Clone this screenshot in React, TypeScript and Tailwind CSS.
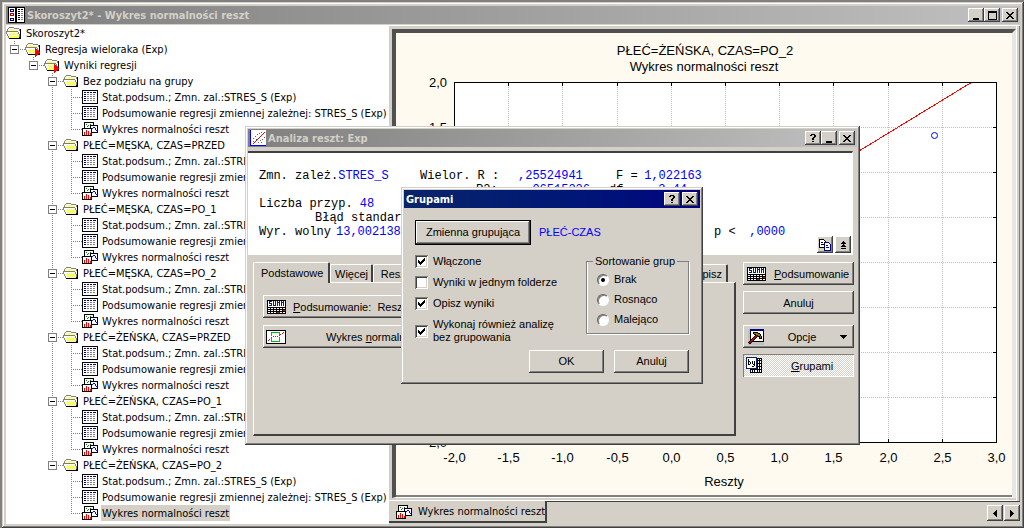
import { ReactNode } from 'react';
import clsx from 'clsx';

const RAISED =
    'shadow-[inset_-1px_-1px_#404040,inset_1px_1px_#fff,inset_-2px_-2px_#808080,inset_2px_2px_#d4d0c8]';
const FRAME =
    'bg-[#d4d0c8] shadow-[inset_-1px_-1px_#404040,inset_1px_1px_#d4d0c8,inset_-2px_-2px_#808080,inset_2px_2px_#fff]';
const UI_FONT = "font-['Liberation_Sans',Arial,sans-serif]";
const TAHOMA_FONT = "font-['DejaVu_Sans_Condensed','Liberation_Sans',sans-serif]";

/* ---------- icons ---------- */

function FolderIcon({ marked }: { marked?: boolean }) {
    return (
        <svg width="16" height="16" viewBox="0 0 16 16" className="shrink-0" shapeRendering="crispEdges">
            <path d="M2 3h6v1h5v2h1v7H3V7H2z" fill="#fff" />
            <path d="M3 4h5v1h4v2H3z" fill="#ffff80" />
            <path d="M3 2h5v1h5v1h1v2h-1V4H8V3H3v1H2v2H1V4h1V3h1z" fill="#808080" />
            <path d="M1 7h11v1h1v3h1v2H3v-2H2V9H1z" fill="#fff" />
            <path d="M3 8h9v2h1v3H4v-2H3z" fill="#ffff50" />
            <path
                d="M3 8h1v1H3zM5 8h1v1H5zM7 8h1v1H7zM9 8h1v1H9zM4 10h1v1H4zM6 10h1v1H6zM8 10h1v1H8zM10 10h1v1h-1zM5 12h1v1H5zM7 12h1v1H7zM9 12h1v1H9zM11 12h1v1h-1z"
                fill="#fff"
            />
            <path d="M0 6h12v1H0zM0 7h1v2H0zM1 9h1v2H1zM2 11h1v2H2zM12 7h1v2h-1zM13 9h1v3h-1z" fill="#808080" />
            <path d="M14 4h1v9h-1zM3 13h12v1H3zM13 12h1v1h-1z" fill="#000" />
            {marked && <path d="M10 7h1v1h1v1h1v1h1v1h1v1h-1v1h-1v1h-1v1h-1v1h-1z" fill="#f00" />}
        </svg>
    );
}

function SheetIcon() {
    return (
        <svg width="16" height="16" viewBox="0 0 16 16" className="shrink-0" shapeRendering="crispEdges">
            <rect x="0.5" y="1.5" width="15" height="13" fill="#fff" stroke="#000" />
            <path d="M2 3.5h2M5 3.5h2M8 3.5h2M11 3.5h3" stroke="#000080" />
            <path d="M2 5.5h2M2 7.5h2M2 9.5h2M2 11.5h2" stroke="#000080" />
            <path
                d="M5 5.5h2M8 5.5h2M11 5.5h2M5 7.5h2M8 7.5h2M11 7.5h2M5 9.5h2M8 9.5h2M11 9.5h2M5 11.5h2M8 11.5h2M11 11.5h2"
                stroke="#808080"
            />
        </svg>
    );
}

function GraphIcon() {
    return (
        <svg width="16" height="16" viewBox="0 0 16 16" className="shrink-0" shapeRendering="crispEdges">
            <rect x="2.5" y="1.5" width="9" height="7" fill="#fff" stroke="#000" />
            <path d="M4 3.5h1M6 4.5h1M8 3.5h1M5 5.5h1" stroke="#008000" />
            <rect x="8.5" y="4.5" width="7" height="7" fill="#fff" stroke="#000" />
            <path d="M10 7.5h1M11 6.5h2M13 7.5h1M13 8.5h1M14 9.5h1" stroke="#00f" />
            <rect x="0.5" y="7.5" width="9" height="7" fill="#fff" stroke="#000" />
            <path d="M2.5 11v3M4.5 9v5M6.5 10v4M8.5 12v2" stroke="#f00" />
        </svg>
    );
}

function WorkbookIcon() {
    return (
        <svg width="17" height="17" viewBox="0 0 17 17" className="shrink-0" shapeRendering="crispEdges">
            <rect x="0.5" y="0.5" width="16" height="15" fill="#fff" stroke="#000" />
            <path d="M8.5 0v16M7.5 0v16" stroke="#000" />
            <rect x="2.5" y="2.5" width="3" height="2" fill="#ffff80" stroke="#000080" />
            <rect x="2.5" y="6.5" width="3" height="2" fill="#fff" stroke="#c00000" />
            <rect x="2.5" y="11.5" width="3" height="2" fill="#ffff80" stroke="#000080" />
            <path d="M10 2.5h2M13 2.5h2M10 4.5h2M10 6.5h2M10 8.5h2M10 10.5h2M10 12.5h2" stroke="#000" />
            <path d="M13 4.5h2M13 6.5h2M13 8.5h2M13 10.5h2M13 12.5h2" stroke="#808080" />
        </svg>
    );
}

function ScatterIcon() {
    return (
        <svg width="16" height="16" viewBox="0 0 16 16" className="shrink-0" shapeRendering="crispEdges">
            <path d="M0 0h16v16H0z" fill="#fff" />
            <path d="M0.5 0v16M0 15.5h16" stroke="#00f" />
            <path d="M3 14L15 2" stroke="#f00" shapeRendering="auto" />
            <path
                d="M3 8.5h1M5 6.5h1M7 4.5h1M9 3.5h1M11 2.5h1M3 11.5h1M6 9.5h1M8 12.5h1M10 10.5h1M12 9.5h1M14 7.5h1M11 12.5h1"
                stroke="#606060"
            />
        </svg>
    );
}

function SummaryIcon() {
    return (
        <svg width="19" height="14" viewBox="0 0 19 14" className="shrink-0" shapeRendering="crispEdges">
            <path d="M0 0h19v14H0z" fill="#000" />
            <path d="M1 1h17v6H1z" fill="#fff" />
            <path
                d="M2 1.5h3M2 2.5h1M2 3.5h3M4 4.5h1M2 5.5h3M6.5 1v5M8.5 1v5M7 5.5h1M10.5 1v5M11 2.5h1M12.5 1v5M14.5 1v5M15 2.5h1M16.5 1v5"
                stroke="#0a246a"
            />
            <path d="M1 8.5h17M1 10.5h17M1 12.5h17" stroke="#fff" strokeDasharray="2 1" />
            <path d="M16 10.5h2M10 12.5h2" stroke="#f00" />
        </svg>
    );
}

function NormalPlotIcon() {
    return (
        <svg width="20" height="14" viewBox="0 0 20 14" className="shrink-0" shapeRendering="crispEdges">
            <rect x="0.5" y="0.5" width="19" height="13" fill="#fff" stroke="#000" />
            <path d="M5.5 6V2.5h8V5M5.5 8v3.5h8V7" fill="none" stroke="#00c000" />
            <path
                d="M2 10.5h1M3 9.5h1M5 7.5h1M7 6.5h1M9 6.5h1M11 6.5h1M13 5.5h1M14 4.5h1M16 3.5h1M17 2.5h1"
                stroke="#f00"
            />
        </svg>
    );
}

function HammerIcon() {
    return (
        <svg width="16" height="16" viewBox="0 0 16 16" className="shrink-0" shapeRendering="crispEdges">
            <path d="M0 0h16v16H0z" fill="#c0c0c0" />
            <rect x="2.5" y="0.5" width="13" height="12" fill="#fff" stroke="#000" />
            <path d="M2 0h14v2H2z" fill="#000080" />
            <path d="M5 3h5v1h2v1h1v2h1v3h-3V8h-1V7H8V6H6V5H5z" fill="#000" />
            <path d="M6 4h4v1h2v2h1v2h-1V7h-2V6H8V5H6z" fill="#808000" />
            <path d="M9 6.5L1 14.5" stroke="#000" strokeWidth="3" />
            <path d="M9 6.5L1.5 14" stroke="#c00000" />
        </svg>
    );
}

function ByGroupIcon() {
    return (
        <svg width="17" height="17" viewBox="0 0 17 17" className="shrink-0" shapeRendering="crispEdges">
            <path d="M4 1h12v15H4z" fill="#000" />
            <path
                d="M12 2h1v1h-1zM14 2h1v1h-1zM12 4h1v2h-1zM14 4h1v2h-1zM12 7h1v2h-1zM14 7h1v2h-1zM12 10h1v2h-1zM14 10h1v2h-1zM5 13h1v2H5zM7 13h1v2H7zM9 13h2v2H9zM12 13h1v2h-1zM14 13h1v2h-1z"
                fill="#fff"
            />
            <rect x="0.5" y="0.5" width="10" height="11" fill="#fff" stroke="#0a246a" />
            <path d="M2.5 2v6M3 4.5h1M4.5 5v2M3 7.5h1M6.5 4v3M7 7.5h1M8.5 4v5M6 9.5h2" stroke="#000" />
        </svg>
    );
}

function CopyIcon() {
    return (
        <svg width="12" height="12" viewBox="0 0 12 12" shapeRendering="crispEdges">
            <path d="M0.5 0.5h4l2 2v6h-6z" fill="#fff" stroke="#000" />
            <path d="M2 3.5h2M2 5.5h3" stroke="#000" />
            <path d="M5.5 3.5h4l2 2v6h-6z" fill="#fff" stroke="#000080" />
            <path d="M7 6.5h2M7 8.5h3" stroke="#000080" />
        </svg>
    );
}

function RollUpIcon() {
    return (
        <svg width="5" height="8" viewBox="0 0 5 8" shapeRendering="crispEdges">
            <path d="M2 0h1v1h1v1h1v1H3v1h1v1h1v1H0V5h1V4h1V3H0V2h1V1h1zM0 7h5v1H0z" fill="#000" />
        </svg>
    );
}

/* ---------- window chrome ---------- */

type Glyph = 'help' | 'min' | 'max' | 'close';

const GLYPHS: Record<Glyph, string> = {
    help: 'M2 0h4v1H2zM1 1h2v1H1zM5 1h2v2H5zM4 3h2v1H4zM3 4h2v2H3zM3 7h2v1H3z',
    min: 'M1 7h6v2H1z',
    max: 'M0 0h9v9H0zM1 2v6h7V2z',
    close: 'M0 1h2v1h1v1h2V2h1V1h2v1H7v1H6v1H5v1h1v1h1v1h1v1H6V7H5V6H3v1H2v1H0V7h1V6h1V5h1V4H2V3H1V2H0z',
};

const GLYPH_LABELS: Record<Glyph, string> = {
    help: 'Pomoc',
    min: 'Minimalizuj',
    max: 'Maksymalizuj',
    close: 'Zamknij',
};

function CaptionButton({ glyph, className }: { glyph: Glyph; className?: string }) {
    return (
        <button
            type="button"
            aria-label={GLYPH_LABELS[glyph]}
            className={clsx('flex h-3.5 w-4 items-center justify-center bg-[#d4d0c8]', RAISED, className)}
        >
            <svg width="9" height="9" viewBox="0 0 9 9" shapeRendering="crispEdges">
                <path d={GLYPHS[glyph]} fill="#000" fillRule="evenodd" />
            </svg>
        </button>
    );
}

function TitleBar({
    title,
    icon,
    active,
    buttons,
}: {
    title: string;
    icon?: ReactNode;
    active?: boolean;
    buttons: Glyph[];
}) {
    return (
        <header
            className={clsx(
                'flex h-[18px] shrink-0 items-center bg-linear-to-r px-0.5 text-[11px] leading-4 font-bold whitespace-nowrap',
                TAHOMA_FONT,
                active ? 'from-[#0a246a] to-[#000080] text-white' : 'from-[#808080] to-[#c0c0c0] text-[#d4d0c8]',
            )}
        >
            {icon}
            <h2 className={clsx('flex-1 pt-0.5', icon && 'pl-0.5')}>{title}</h2>
            {buttons.map((glyph) => (
                <CaptionButton key={glyph} glyph={glyph} className={clsx(glyph === 'close' && 'ml-0.5')} />
            ))}
        </header>
    );
}

function PushButton({ children, className }: { children: ReactNode; className?: string }) {
    return (
        <button
            type="button"
            className={clsx('flex h-[23px] items-center bg-[#d4d0c8] whitespace-nowrap', RAISED, className)}
        >
            {children}
        </button>
    );
}

/* ---------- workbook tree ---------- */

function Joint({ up, down, across, box }: { up?: boolean; down?: boolean; across?: boolean; box?: boolean }) {
    return (
        <svg width="19" height="16" viewBox="0 0 19 16" className="shrink-0" shapeRendering="crispEdges">
            <g stroke="#808080" strokeDasharray="1 1">
                {up && <path d="M8.5 0v8" />}
                {down && <path d="M8.5 8v8" />}
                {across && <path d="M8 8.5h11" />}
            </g>
            {box && (
                <>
                    <rect x="4.5" y="4.5" width="8" height="8" fill="#fff" stroke="#808080" />
                    <path d="M6 8.5h5" stroke="#000" />
                </>
            )}
        </svg>
    );
}

function TreeRow({ children, label, selected }: { children: ReactNode; label: string; selected?: boolean }) {
    return (
        <li className="flex h-4 items-center">
            {children}
            <span className={clsx('ml-[3px] h-4 px-px leading-[18px]', selected && 'bg-[#d4d0c8]')}>{label}</span>
        </li>
    );
}

const GROUPS = [
    'Bez podziału na grupy',
    'PŁEĆ=MĘSKA, CZAS=PRZED',
    'PŁEĆ=MĘSKA, CZAS=PO_1',
    'PŁEĆ=MĘSKA, CZAS=PO_2',
    'PŁEĆ=ŻEŃSKA, CZAS=PRZED',
    'PŁEĆ=ŻEŃSKA, CZAS=PO_1',
    'PŁEĆ=ŻEŃSKA, CZAS=PO_2',
];

const RESULTS = [
    'Stat.podsum.; Zmn. zal.:STRES_S (Exp)',
    'Podsumowanie regresji zmiennej zależnej: STRES_S (Exp)',
    'Wykres normalności reszt',
];

function Tree() {
    return (
        <nav className={clsx('w-[383px] shrink-0 overflow-hidden bg-white text-[11px] whitespace-nowrap', TAHOMA_FONT)}>
            <ul>
                <TreeRow label="Skoroszyt2*">
                    <FolderIcon />
                </TreeRow>
                <TreeRow label="Regresja wieloraka (Exp)">
                    <Joint up across box />
                    <FolderIcon marked />
                </TreeRow>
                <TreeRow label="Wyniki regresji">
                    <Joint />
                    <Joint up across box />
                    <FolderIcon marked />
                </TreeRow>
                {GROUPS.map((group, g) => {
                    const last = g === GROUPS.length - 1;
                    return (
                        <li key={group}>
                            <ul>
                                <TreeRow label={group}>
                                    <Joint />
                                    <Joint />
                                    <Joint up down={!last} across box />
                                    <FolderIcon />
                                </TreeRow>
                                {RESULTS.map((result, r) => (
                                    <TreeRow key={result} label={result} selected={last && r === 2}>
                                        <Joint />
                                        <Joint />
                                        <Joint up={!last} down={!last} />
                                        <Joint up down={r < 2} across />
                                        {r < 2 ? <SheetIcon /> : <GraphIcon />}
                                    </TreeRow>
                                ))}
                            </ul>
                        </li>
                    );
                })}
            </ul>
        </nav>
    );
}

/* ---------- normality plot ---------- */

const X_LABELS = ['-2,0', '-1,5', '-1,0', '-0,5', '0,0', '0,5', '1,0', '1,5', '2,0', '2,5', '3,0'];
const Y_LABELS = ['2,0', '1,5', '1,0', '0,5', '0,0', '-0,5', '-1,0', '-1,5', '-2,0'];

function Chart() {
    const px = (i: number) => Math.round(58 + i * 54.2) + 0.5;
    const py = (i: number) => 49.5 + i * 45;
    return (
        <svg viewBox="0 0 616 462" className={clsx('block h-full w-full text-[13px]', UI_FONT)}>
            <rect x="58.5" y="49.5" width="542" height="360" fill="#fff" />
            <g shapeRendering="crispEdges">
                {X_LABELS.map((label, i) => (
                    <g key={label}>
                        <path d={`M${px(i)} 50v359`} stroke="#c0c0c0" strokeDasharray="1 1" />
                        <path d={`M${px(i)} 50v3M${px(i)} 409v-3`} stroke="#000" />
                    </g>
                ))}
                {Y_LABELS.map((label, i) => (
                    <g key={label}>
                        <path d={`M59 ${py(i)}h541`} stroke="#c0c0c0" strokeDasharray="1 1" />
                        <path d={`M59 ${py(i)}h3M600 ${py(i)}h-3`} stroke="#000" />
                    </g>
                ))}
                <rect x="58.5" y="49.5" width="542" height="360" fill="none" stroke="#000" />
                <path d="M574.5 50L58 365" stroke="#f00" />
            </g>
            <circle cx="538.5" cy="102.5" r="3" fill="#fff" stroke="#00f" />
            <text x="309" y="22" textAnchor="middle">
                PŁEĆ=ŻEŃSKA, CZAS=PO_2
            </text>
            <text x="308" y="38" textAnchor="middle">
                Wykres normalności reszt
            </text>
            {X_LABELS.map((label, i) => (
                <text key={label} x={px(i)} y="429" textAnchor="middle">
                    {label}
                </text>
            ))}
            {Y_LABELS.map((label, i) => (
                <text key={label} x="51" y={py(i) + 4} textAnchor="end">
                    {label}
                </text>
            ))}
            <text x="328" y="453" textAnchor="middle">
                Reszty
            </text>
        </svg>
    );
}

function GraphPane() {
    return (
        <main className="flex min-w-0 flex-1 flex-col bg-[#d4d0c8]">
            <div className="flex min-h-0 flex-1 flex-col pt-1 pr-1 pb-[3px] pl-[3px] shadow-[inset_0_1px_#fff,inset_-1px_0_#808080,inset_-3px_0_#d4d0c8,inset_-4px_-1px_#fff]">
                <div className="flex min-h-0 flex-1 flex-col border-t-4 border-r-4 border-b border-l-4 border-t-[#505050] border-r-[#e8e6e2] border-b-white border-l-[#505050]">
                    <div className="min-h-0 flex-1 border-b-2 border-[#808080] bg-[#fffaf0]">
                        <Chart />
                    </div>
                </div>
            </div>
            <div className="flex h-[23px] shrink-0 items-start justify-between border-t border-[#404040]">
                <button
                    type="button"
                    className={clsx(
                        '-mt-px flex h-[22px] w-[158px] items-center gap-1.5 border-r-2 border-b-2 border-[#404040] bg-[#d4d0c8] pt-0.5 pl-[7px] text-[11px] whitespace-nowrap',
                        TAHOMA_FONT,
                    )}
                >
                    <GraphIcon />
                    Wykres normalności reszt
                </button>
                <div className="flex gap-px pt-[3px]">
                    <button
                        type="button"
                        aria-label="Poprzedni"
                        className={clsx('flex h-4 w-4 items-center justify-center', RAISED)}
                    >
                        <svg width="4" height="7" viewBox="0 0 4 7" shapeRendering="crispEdges">
                            <path d="M3 0h1v7H3zM2 1h1v5H2zM1 2h1v3H1zM0 3h1v1H0z" />
                        </svg>
                    </button>
                    <button
                        type="button"
                        aria-label="Następny"
                        className={clsx('flex h-4 w-4 items-center justify-center', RAISED)}
                    >
                        <svg width="4" height="7" viewBox="0 0 4 7" shapeRendering="crispEdges">
                            <path d="M0 0h1v7H0zM1 1h1v5H1zM2 2h1v3H2zM3 3h1v1H3z" />
                        </svg>
                    </button>
                </div>
            </div>
        </main>
    );
}

/* ---------- residual analysis window ---------- */

function Value({ children }: { children: ReactNode }) {
    return <span className="text-[#0000ff]">{children}</span>;
}

function Summary() {
    return (
        <section className="relative mt-1 mr-1 h-[104px] overflow-hidden border-t-2 border-r border-b border-t-[#404040] border-r-white border-b-white bg-white pt-4 pl-[11px] font-['Liberation_Mono',monospace] text-[12px] leading-[14px] whitespace-pre">
            <div className="flex">
                <span className="w-[161px]">
                    Zmn. zależ.<Value>STRES_S</Value>
                </span>
                <span className="w-[98px]">Wielor. R :</span>
                <span className="w-[98px]">
                    <Value>,25524941</Value>
                </span>
                <span className="w-[21px]">F =</span>
                <Value> 1,022163</Value>
            </div>
            <div className="flex">
                <span className="w-[217px]" />
                <span className="w-[42px]">R2:</span>
                <span className="w-[91px]">
                    <Value> ,06515226</Value>
                </span>
                <span className="w-[42px]">df =</span>
                <Value> 3,44</Value>
            </div>
            <div>
                Liczba przyp. <Value>48</Value>
            </div>
            <div className="pl-14">Błąd standardowy estymacji:</div>
            <div className="flex">
                <span className="w-[77px]">Wyr. wolny</span>
                <span className="w-[378px]">
                    <Value>13,002138142</Value>
                </span>
                <span className="w-[28px]">p {'<'}</span>
                <Value> ,0000</Value>
            </div>
            <div className="absolute right-px bottom-px flex gap-0.5">
                <button
                    type="button"
                    aria-label="Kopiuj"
                    className={clsx('flex h-[17px] w-4 items-center justify-center bg-[#d4d0c8]', RAISED)}
                >
                    <CopyIcon />
                </button>
                <button
                    type="button"
                    aria-label="Zwiń"
                    className={clsx('flex h-[17px] w-4 items-center justify-center bg-[#d4d0c8]', RAISED)}
                >
                    <RollUpIcon />
                </button>
            </div>
        </section>
    );
}

function Tab({ label, selected, className }: { label: string; selected?: boolean; className?: string }) {
    return (
        <button
            type="button"
            role="tab"
            aria-selected={!!selected}
            className={clsx(
                'rounded-t-xs border-t border-r-2 border-l border-t-white border-r-[#404040] border-l-white bg-[#d4d0c8]',
                selected ? 'z-10 -mb-px h-[21px] px-[7px]' : 'h-[18px] px-1',
                className,
            )}
        >
            {label}
        </button>
    );
}

function AnalysisWindow() {
    return (
        <section
            className={clsx(
                'absolute top-[126px] left-[245px] w-[615px] p-[3px] text-[11px] leading-4',
                FRAME,
                UI_FONT,
            )}
        >
            <TitleBar title="Analiza reszt: Exp" icon={<ScatterIcon />} buttons={['help', 'min', 'close']} />
            <Summary />
            <div className="flex gap-[7px] pt-[7px] pr-[3px] pb-1.5 pl-[5px]">
                <div className="flex min-w-0 flex-1 flex-col">
                    <div role="tablist" className="flex h-5 items-end whitespace-nowrap">
                        <Tab label="Podstawowe" selected className="w-[77px]" />
                        <Tab label="Więcej" className="w-[43px]" />
                        <Tab label="Reszty" className="w-[50px]" />
                        <Tab label="Zapisz" className="mr-2 ml-auto" />
                    </div>
                    <div className="flex h-[154px] flex-col items-start gap-[7px] border-t border-r-2 border-b-2 border-l border-t-white border-r-[#404040] border-b-[#404040] border-l-white pt-3 pl-[9px]">
                        <PushButton className="w-[210px] gap-[7px] pl-1">
                            <SummaryIcon />
                            <span>
                                <u>P</u>odsumowanie:&nbsp; Reszty
                            </span>
                        </PushButton>
                        <PushButton className="w-[210px] gap-10 pl-[3px]">
                            <NormalPlotIcon />
                            <span>
                                Wykres <u>n</u>ormalności
                            </span>
                        </PushButton>
                    </div>
                </div>
                <div className="flex w-[111px] shrink-0 flex-col">
                    <PushButton className="gap-2 pl-1">
                        <SummaryIcon />
                        <span>
                            <u>P</u>odsumowanie
                        </span>
                    </PushButton>
                    <PushButton className="mt-1.5 justify-center">Anuluj</PushButton>
                    <PushButton className="mt-[11px] justify-between pr-[7px] pl-[5px]">
                        <HammerIcon />
                        <span>Opcje</span>
                        <svg width="7" height="4" viewBox="0 0 7 4" shapeRendering="crispEdges">
                            <path d="M0 0h7v1H0zM1 1h5v1H1zM2 2h3v1H2zM3 3h1v1H3z" />
                        </svg>
                    </PushButton>
                    <button
                        type="button"
                        aria-pressed="true"
                        className="mt-1.5 flex h-[23px] items-center gap-7 bg-[repeating-conic-gradient(#fff_0_25%,#d4d0c8_0_50%)] bg-[length:2px_2px] pl-[3px] shadow-[inset_1px_1px_#808080,inset_-1px_-1px_#fff]"
                    >
                        <ByGroupIcon />
                        <span>
                            <u>G</u>rupami
                        </span>
                    </button>
                </div>
            </div>
        </section>
    );
}

/* ---------- by-group dialog ---------- */

const SUNKEN = 'shadow-[inset_1px_1px_#808080,inset_-1px_-1px_#fff,inset_2px_2px_#404040,inset_-2px_-2px_#d4d0c8]';

function Check({ label, checked }: { label: ReactNode; checked?: boolean }) {
    return (
        <label className="flex items-center gap-[5px]">
            <span className="relative flex h-[13px] w-[13px] shrink-0">
                <input
                    type="checkbox"
                    defaultChecked={checked}
                    className={clsx('peer h-full w-full appearance-none bg-white', SUNKEN)}
                />
                <svg
                    className="pointer-events-none absolute inset-0 hidden peer-checked:block"
                    width="13"
                    height="13"
                    viewBox="0 0 13 13"
                    shapeRendering="crispEdges"
                >
                    <path d="M3 5h1v1h1v1h1V6h1V5h1V4h1V3h1v3H9v1H8v1H7v1H6v1H5V9H4V8H3z" />
                </svg>
            </span>
            <span>{label}</span>
        </label>
    );
}

function Choice({ label, checked }: { label: string; checked?: boolean }) {
    return (
        <label className="flex items-center gap-[5px]">
            <span className="relative flex h-3 w-3 shrink-0">
                <input
                    type="radio"
                    name="sort"
                    defaultChecked={checked}
                    className="peer h-full w-full appearance-none rounded-full border border-t-[#606060] border-r-white border-b-white border-l-[#606060] bg-white shadow-[inset_1px_1px_#808080]"
                />
                <span className="pointer-events-none absolute top-1 left-1 hidden h-1 w-1 rounded-full bg-black peer-checked:block" />
            </span>
            {label}
        </label>
    );
}

function GroupDialog() {
    return (
        <section
            role="dialog"
            aria-label="Grupami"
            className={clsx(
                'absolute top-[187px] left-[401px] w-[302px] p-[3px] text-[11px] leading-[13px]',
                FRAME,
                UI_FONT,
            )}
        >
            <TitleBar title="Grupami" active buttons={['help', 'close']} />
            <form className="px-[11px] pt-3 pb-2">
                <div className="flex items-center gap-2">
                    <div className="border border-black">
                        <PushButton className="h-[22px] w-[114px] justify-center">Zmienna grupująca</PushButton>
                    </div>
                    <output className="text-[#0000ff]">PŁEĆ-CZAS</output>
                </div>
                <div className="flex items-start justify-between pt-2.5">
                    <div className="flex flex-col gap-2">
                        <Check label="Włączone" checked />
                        <Check label="Wyniki w jednym folderze" />
                        <Check label="Opisz wyniki" checked />
                        <Check
                            label={
                                <>
                                    Wykonaj również analizę
                                    <br />
                                    bez grupowania
                                </>
                            }
                            checked
                        />
                    </div>
                    <fieldset className="h-[79px] w-[103px] border border-[#808080] px-2.5 whitespace-nowrap shadow-[1px_1px_#fff,inset_1px_0_#fff]">
                        <legend className="-ml-1 px-0.5">Sortowanie grup</legend>
                        <div className="flex flex-col gap-[7px] pt-[5px]">
                            <Choice label="Brak" checked />
                            <Choice label="Rosnąco" />
                            <Choice label="Malejąco" />
                        </div>
                    </fieldset>
                </div>
                <div className="flex justify-end gap-2.5 pt-1.5">
                    <PushButton className="w-[75px] justify-center">OK</PushButton>
                    <PushButton className="w-[75px] justify-center">Anuluj</PushButton>
                </div>
            </form>
        </section>
    );
}

export default function App() {
    return (
        <div className="relative h-screen min-h-[528px] overflow-hidden bg-[#808080] pt-0.5 pl-0.5 text-black">
            <div className={clsx('flex h-full flex-col p-1', FRAME)}>
                <TitleBar
                    title="Skoroszyt2* - Wykres normalności reszt"
                    icon={<WorkbookIcon />}
                    buttons={['min', 'max', 'close']}
                />
                <div className="flex min-h-0 flex-1 pt-px">
                    <Tree />
                    <GraphPane />
                </div>
            </div>
            <AnalysisWindow />
            <GroupDialog />
        </div>
    );
}
